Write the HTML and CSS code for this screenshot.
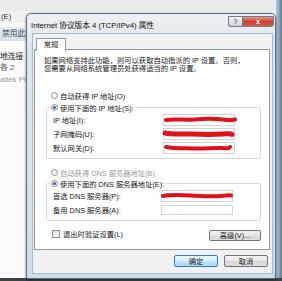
FILE: index.html
```html
<!DOCTYPE html>
<html>
<head>
    <meta charset="utf-8">
    <title>Internet 协议版本 4 (TCP/IPv4) 属性</title>
    <link rel="stylesheet" href="styles.css">
</head>
<body>
<div class="screen">
    <div class="backdrop">
        <div class="bgwin">
            <div class="bg-top"></div>
            <div class="bg-menu">(E)</div>
            <div class="bg-toolbar">禁用此网</div>
            <div class="bg-list">
                <div class="bg-name">地连接</div>
                <div class="bg-sub">各 2</div>
                <div class="bg-sub grey">altek PI</div>
            </div>
        </div>
        <div class="edge"></div>
    </div>
    <div class="taskbar"></div>

    <div class="dialog">
        <div class="titlebar">
            <span class="title">Internet 协议版本 4 (TCP/IPv4) 属性</span>
            <span class="help">?</span>
            <span class="close">x</span>
        </div>
        <div class="frame">
            <div class="client">
                <div class="tabs"><span class="tab">常规</span></div>
                <div class="panel">
                    <p class="desc">如果网络支持此功能，则可以获取自动指派的 IP 设置。否则，<br>您需要从网络系统管理员处获得适当的 IP 设置。</p>

                    <div class="radio first"><span class="dot"></span>自动获得 IP 地址(O)</div>
                    <div class="group ip">
                        <div class="radio legend"><span class="dot on"></span>使用下面的 IP 地址(S):</div>
                        <div class="row">
                            <span class="label">IP 地址(I):</span>
                            <span class="field">
                                <svg class="scribble" viewBox="0 0 76 12"><path d="M3 6 C12 4.5 22 6.5 32 5.5 S52 4.5 62 5.8 S70 5 72 5.5"/></svg>
                            </span>
                        </div>
                        <div class="row">
                            <span class="label">子网掩码(U):</span>
                            <span class="field">
                                <svg class="scribble thick" viewBox="0 0 76 12"><path d="M2 5 C10 7 20 5.5 30 6 S50 6.5 60 6 S67 5.5 69 6.5"/></svg>
                            </span>
                        </div>
                        <div class="row">
                            <span class="label">默认网关(D):</span>
                            <span class="field">
                                <svg class="scribble" viewBox="0 0 76 12"><path d="M3 5 C12 7 22 6 32 6.5 S50 5.5 58 6 S66 6.5 67 5"/></svg>
                            </span>
                        </div>
                    </div>

                    <div class="radio second disabled"><span class="dot"></span>自动获得 DNS 服务器地址(B)</div>
                    <div class="group dns">
                        <div class="radio legend"><span class="dot on"></span>使用下面的 DNS 服务器地址(E):</div>
                        <div class="row">
                            <span class="label">首选 DNS 服务器(P):</span>
                            <span class="field">
                                <svg class="scribble" viewBox="0 0 76 12"><path d="M2 6 C10 4.5 20 5 30 5.5 S50 7 60 6 S68 5 70 5.5"/></svg>
                            </span>
                        </div>
                        <div class="row">
                            <span class="label">备用 DNS 服务器(A):</span>
                            <span class="field dots">.&nbsp;&nbsp;&nbsp;&nbsp;&nbsp;&nbsp;.&nbsp;&nbsp;&nbsp;&nbsp;&nbsp;&nbsp;.</span>
                        </div>
                    </div>

                    <div class="bottom-row">
                        <div class="check"><span class="box"></span>退出时验证设置(L)</div>
                        <button class="btn advanced">高级(V)...</button>
                    </div>
                </div>
                <div class="actions">
                    <button class="btn default">确定</button>
                    <button class="btn">取消</button>
                </div>
            </div>
        </div>
    </div>
</div>
</body>
</html>
```

FILE: styles.css
```css
body {
    margin: 0;
    font-family: "Liberation Sans", "Noto Sans CJK SC", sans-serif;
    color: #161616;
    background: #fff;
}
.screen {
    position: relative;
    width: 282px;
    height: 281px;
    overflow: hidden;
    display: flex;
    flex-direction: column;
}

/* window behind the dialog */
.backdrop {
    display: flex;
    height: 278px;
}
.bgwin {
    flex: 1;
    background: #fbfbfb;
    font-size: 7.8px;
}
.bg-top {
    height: 11px;
    background: #ebebeb;
}
.bg-menu {
    height: 12px;
    line-height: 12px;
    padding-left: 1px;
    background: #f1f1f1;
    color: #333;
}
.bg-toolbar {
    height: 14px;
    line-height: 14px;
    margin-top: 4px;
    padding-left: 2px;
    background: linear-gradient(#e8eef5, #d6e0eb);
    color: #3c4550;
}
.bg-list {
    padding-top: 10px;
}
.bg-name {
    line-height: 11px;
    color: #222;
}
.bg-sub {
    line-height: 11px;
    color: #555;
}
.bg-sub.grey {
    margin-top: 1px;
    color: #999;
}
.edge {
    width: 6px;
    background: linear-gradient(90deg, #b9cde0 0, #8ea7c0 50%, #5d7590 100%);
}
.taskbar {
    height: 3px;
    background: #3d4148;
}

/* dialog window */
.dialog {
    position: absolute;
    left: 26px;
    top: 13px;
    width: 248px;
    height: 264px;
    border: 1px solid #5f6f80;
    border-radius: 5px 5px 2px 2px;
    background: linear-gradient(#eef1f5 0, #dfe6ee 30px, #cfdceb 100%);
    box-shadow: 0 1px 3px rgba(0, 0, 0, 0.5);
    display: flex;
    flex-direction: column;
}
.titlebar {
    height: 19px;
    display: flex;
    align-items: flex-start;
    padding: 0 1px 0 4px;
}
.title {
    flex: 1;
    font-size: 7.7px;
    line-height: 8px;
    margin-top: 8px;
    color: #101010;
    white-space: nowrap;
}
.help, .close {
    height: 9px;
    margin-top: 2px;
    font-size: 7px;
    line-height: 9px;
    text-align: center;
    border: 1px solid #6d7a88;
}
.help {
    width: 13px;
    border-radius: 0 0 0 3px;
    border-right: none;
    background: linear-gradient(#eef0f3, #cdd4dc);
    color: #333;
}
.close {
    width: 30px;
    border-radius: 0 0 3px 0;
    background: linear-gradient(#e59a8e, #c94333 50%, #d45a48);
    color: #fff;
    font-weight: bold;
}
.frame {
    flex: 1;
    padding: 0 2px 4px 5px;
    display: flex;
}
.client {
    flex: 1;
    background: #f1f1f1;
    border: 1px solid #a9b7c6;
    padding: 4px 2px 0 1px;
    font-size: 7.3px;
}

/* tab */
.tabs {
    display: flex;
    height: 11px;
    padding-left: 2px;
}
.tab {
    width: 28px;
    height: 12px;
    line-height: 12px;
    text-align: center;
    background: #fff;
    border: 1px solid #8e99a5;
    border-bottom: none;
    position: relative;
    z-index: 1;
}
.panel {
    height: 201px;
    background: #fff;
    border: 1px solid #8e99a5;
    padding: 0 8px 0 10px;
    box-sizing: border-box;
}
.desc {
    margin: 7px 0 0 -1px;
    line-height: 7.5px;
    white-space: nowrap;
}

/* radios and groups */
.radio {
    display: flex;
    align-items: center;
    height: 11px;
    white-space: nowrap;
}
.radio.first {
    margin-top: 18px;
    margin-left: 6px;
}
.radio.second {
    margin-top: 8px;
    margin-left: 6px;
}
.radio.disabled {
    color: #9a9a9a;
}
.dot {
    width: 5px;
    height: 5px;
    border: 1px solid #8f8f8f;
    border-radius: 50%;
    background: #f4f4f4;
    margin-right: 2px;
    display: flex;
    align-items: center;
    justify-content: center;
}
.dot.on::after {
    content: "";
    width: 3px;
    height: 3px;
    border-radius: 50%;
    background: #2a5f9c;
}
.group {
    border: 1px solid #d3dbe2;
    border-radius: 2px;
    margin: 6px 0 0 1px;
    padding: 0 0 3px 6px;
}
.legend {
    margin: -6px 0 0 -3px;
    padding: 0 2px 0 1px;
    background: #fff;
    align-self: flex-start;
    width: max-content;
}
.group.dns {
    margin-top: 5px;
}
.row {
    display: flex;
    align-items: center;
    height: 14px;
}
.label {
    width: 110px;
    white-space: nowrap;
}
.field {
    position: relative;
    width: 70px;
    height: 10px;
    border: 1px solid #cdd3d9;
    background: #fff;
    color: #999;
    font-size: 6px;
    line-height: 10px;
}
.group.dns .label {
    width: 108px;
}
.dots {
    padding-left: 16px;
    box-sizing: border-box;
    width: 72px;
}
.scribble {
    position: absolute;
    left: -1px;
    top: -1px;
    width: 76px;
    height: 12px;
    overflow: visible;
}
.scribble path {
    fill: none;
    stroke: #e3101a;
    stroke-width: 4;
    stroke-linecap: round;
}
.scribble.thick path {
    stroke-width: 5;
}

/* checkbox and buttons */
.bottom-row {
    display: flex;
    justify-content: space-between;
    align-items: flex-start;
    margin-top: 7px;
}
.check {
    display: flex;
    align-items: center;
    height: 11px;
    margin-left: 7px;
}
.box {
    width: 6px;
    height: 6px;
    border: 1px solid #8f8f8f;
    background: linear-gradient(#e2e2e2, #fafafa);
    margin-right: 3px;
}
.btn {
    font-family: inherit;
    font-size: 7.3px;
    padding: 0;
    height: 11px;
    line-height: 9px;
    border: 1px solid #737373;
    border-radius: 2px;
    background: linear-gradient(#f4f4f4 0, #e6e6e6 50%, #d6d6d6 51%, #e0e0e0 100%);
    color: #1e1e1e;
}
.advanced {
    width: 52px;
    margin-top: 2px;
}
.actions {
    display: flex;
    justify-content: flex-end;
    gap: 6px;
    margin-top: 5px;
    padding-right: 2px;
}
.actions .btn {
    width: 44px;
    height: 12px;
}
.btn.default {
    border-color: #3d7bad;
    background: linear-gradient(#eaf6fd 0, #d9f0fc 50%, #bee6fd 51%, #a7d9f5 100%);
}
```
